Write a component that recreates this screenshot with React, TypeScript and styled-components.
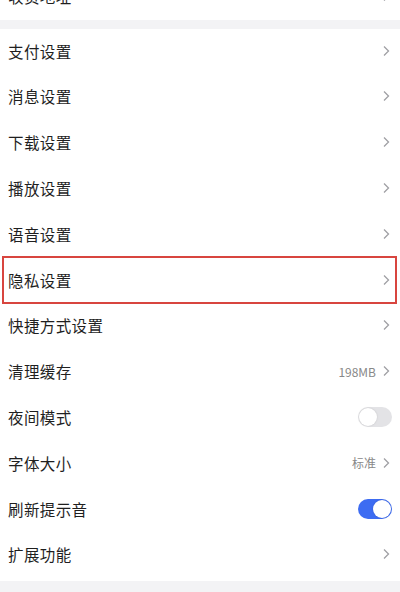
import React from "react";
import styled, { createGlobalStyle } from "styled-components";

const GlobalStyle = createGlobalStyle`
    html, body {
        margin: 0;
        padding: 0;
        background-color: #f3f3f5;
        font-family: "Noto Sans CJK SC", "Noto Sans", sans-serif;
    }
`;

const Page = styled.div`
    width: 400px;
    height: 592px;
    overflow: hidden;
    background-color: #f3f3f5;
    display: flex;
    flex-direction: column;
    gap: 9px;
`;

const Card = styled.div<{ $offset?: number; $tail?: number }>`
    background-color: #ffffff;
    display: flex;
    flex-direction: column;
    margin-top: ${(p) => p.$offset || 0}px;
    padding-bottom: ${(p) => p.$tail || 0}px;
`;

const Row = styled.div<{ $marked?: boolean }>`
    height: 45.8px;
    display: flex;
    align-items: center;
    justify-content: space-between;
    padding: 0 10px 2px 8px;
    box-sizing: border-box;
    position: relative;

    ${(p) =>
        p.$marked &&
        `
        &::after {
            content: "";
            position: absolute;
            left: 2px;
            right: 3px;
            top: -2px;
            bottom: 0px;
            border: 2px solid #d8453f;
            pointer-events: none;
        }
    `}
`;

const Label = styled.span`
    font-size: 15.5px;
    color: #1f1f1f;
    letter-spacing: 0.4px;
`;

const Right = styled.div`
    display: flex;
    align-items: center;
    gap: 6px;
`;

const Value = styled.span`
    font-size: 12px;
    color: #888888;
`;

const Toggle = styled.div<{ $on?: boolean }>`
    width: 34px;
    height: 20px;
    border-radius: 10px;
    background-color: ${(p) => (p.$on ? "#3d6cf2" : "#e3e3e6")};
    position: relative;
    margin-right: -2px;

    &::after {
        content: "";
        position: absolute;
        top: 1px;
        left: ${(p) => (p.$on ? "15px" : "1px")};
        width: 18px;
        height: 18px;
        border-radius: 50%;
        background-color: #ffffff;
        box-shadow: 0 0 2px rgba(0, 0, 0, 0.15);
    }
`;

const Chevron: React.FC = () => (
    <svg width="8" height="12" viewBox="0 0 8 12">
        <path d="M2 1.5 L6.5 6 L2 10.5" fill="none" stroke="#a0a0a4" strokeWidth="1.3" />
    </svg>
);

type Item = {
    label: string;
    value?: string;
    toggle?: boolean;
    on?: boolean;
    marked?: boolean;
};

const items: Item[] = [
    { label: "支付设置" },
    { label: "消息设置" },
    { label: "下载设置" },
    { label: "播放设置" },
    { label: "语音设置" },
    { label: "隐私设置", marked: true },
    { label: "快捷方式设置" },
    { label: "清理缓存", value: "198MB" },
    { label: "夜间模式", toggle: true },
    { label: "字体大小", value: "标准" },
    { label: "刷新提示音", toggle: true, on: true },
    { label: "扩展功能" },
];

const App: React.FC = () => {
    return (
        <Page>
            <GlobalStyle />
            <Card $offset={-26}>
                <Row>
                    <Label>收货地址</Label>
                    <Chevron />
                </Row>
            </Card>
            <Card $tail={3}>
                {items.map((it) => (
                    <Row key={it.label} $marked={it.marked}>
                        <Label>{it.label}</Label>
                        <Right>
                            {it.value && <Value>{it.value}</Value>}
                            {it.toggle ? <Toggle $on={it.on} /> : <Chevron />}
                        </Right>
                    </Row>
                ))}
            </Card>
        </Page>
    );
};

export default App;
